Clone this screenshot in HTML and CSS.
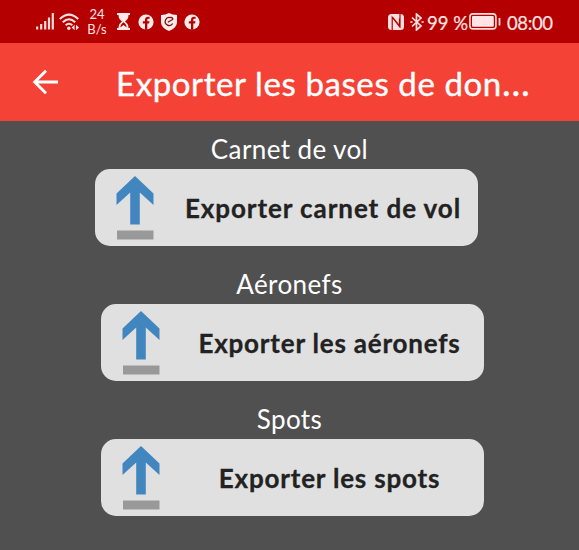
FILE: index.html
```html
<!DOCTYPE html>
<html lang="fr">
<head>
<meta charset="utf-8">
<title>Exporter les bases de données</title>
<link rel="stylesheet" href="styles.css">
</head>
<body>
<svg width="0" height="0" class="defs" aria-hidden="true">
  <symbol id="fb" viewBox="0 0 16 16"><circle cx="8" cy="8" r="7.6" fill="#ffeaea"/><path d="M7 15.8V9.6H4.8V7.3H7V6c0-2.100 1.200-3.200 3.100-3.200h1.500v2h-1.200c-.7 0-1.100.4-1.100 1.100v1.400h2.200l-.4 2.300H9.300v6.200z" fill="#b40000"/></symbol>
  <symbol id="export" viewBox="0 0 40 66"><path d="M20 1 38.500 18.500V30L24.800 17.500v32H15.200v-32L1.500 30V18.500z" fill="#4286c0"/><path d="M2 55.500h36.500v9H2z" fill="#999"/></symbol>
</svg>
<div class="status">
  <div class="left">
    <svg class="signal" width="18" height="17" viewBox="0 0 18 17"><path d="M1.200 13.500v3M5.200 11v5.500M9.200 8v8.500M13 4.500v12M16.800 0v16.500" stroke="#ffdada" stroke-width="2.200"/></svg>
    <svg class="wifi" width="22" height="18" viewBox="0 0 22 18" fill="none" stroke="#ffe0e0" stroke-width="2.100"><path d="M.8 6Q10 -2.800 19.200 6M3.800 9.300Q10 3.200 16.200 9.300M6.700 12.300Q10 9.200 13.300 12.300"/><circle cx="9.800" cy="15.300" r="1.700" fill="#ffe0e0" stroke="none"/><path d="m15.600 11.800-3 2.700 3 2.700zM17 11.800l3 2.700-3 2.700z" fill="#ffe0e0" stroke="none"/></svg>
    <div class="rate"><span>24</span><span>B/s</span></div>
    <svg class="glass" width="13" height="17" viewBox="0 0 13 17"><path d="M0 0h13v2h-1.500c0 3.500-1.500 5-3.500 6.500 2 1.500 3.500 3 3.500 6.500H13v2H0v-2h1.500c0-3.500 1.500-5 3.500-6.500C3 7 1.500 5.500 1.500 2H0z" fill="#ffeaea"/><path d="M3.300 14.500c.3-2.600 1.500-4 3.200-5.200 1.700 1.200 2.900 2.600 3.200 5.200L6.500 12z" fill="#b40000"/></svg>
    <svg class="fb" width="16" height="16"><use href="#fb"/></svg>
    <svg class="shield" width="16" height="18" viewBox="0 0 16 18"><path d="M8 0q3.500 2 8 2v7c0 4.500-3.500 7.200-8 9-4.500-1.800-8-4.500-8-9V2q4.500 0 8-2z" fill="#ffeaea"/><path d="M9.500 4.700A4 4 0 1 0 11.700 10.500M6.800 9.200l4.800-2.700M9.500 4.200q2.500.5 2.300 2.500" fill="none" stroke="#7c1010" stroke-width="1.300"/></svg>
    <svg class="fb" width="16" height="16"><use href="#fb"/></svg>
  </div>
  <div class="right">
    <svg class="nfc" width="16" height="16" viewBox="0 0 16 16"><rect width="16" height="16" rx="3.500" fill="#ffe0e0"/><path d="M4.200 16V3.200L11.500 12.500V4.500M12 0v12.500L4.700 3.500" fill="none" stroke="#b40000" stroke-width="1.200"/></svg>
    <svg class="bt" width="14" height="18" viewBox="0 0 14 18" fill="none" stroke="#ffe0e0" stroke-width="1.700"><path d="m2 4.500 9 8.500-4.500 4V1L11 5l-9 8.500"/><path d="M.3 9h2.200M11.500 9h2.200"/></svg>
    <span class="pct">99 %</span>
    <svg class="battery" width="32" height="17" viewBox="0 0 32 17"><rect x=".9" y=".9" width="26" height="15" rx="3" fill="none" stroke="#ffdede" stroke-width="1.600"/><rect x="3" y="3" width="21.800" height="10.800" rx="1" fill="#ffe5e5"/><path d="M30.500 5v7.500" stroke="#ffdede" stroke-width="1.800"/></svg>
    <span class="time">08:00</span>
  </div>
</div>
<header class="bar">
  <svg class="back" width="26" height="26" viewBox="0 0 26 26" fill="none" stroke="#fff" stroke-width="2.900"><path d="M26 13H2.800M14 1.700 2.700 13 14 24.300"/></svg>
  <h1>Exporter les bases de don<span>…</span></h1>
</header>
<main>
  <section>
    <h2 class="l1">Carnet de vol</h2>
    <button class="shifted"><svg width="40" height="66"><use href="#export"/></svg><span class="b1">Exporter carnet de vol</span></button>
  </section>
  <section>
    <h2 class="l2">Aéronefs</h2>
    <button><svg width="40" height="66"><use href="#export"/></svg><span class="b2">Exporter les aéronefs</span></button>
  </section>
  <section>
    <h2 class="l3">Spots</h2>
    <button><svg width="40" height="66"><use href="#export"/></svg><span class="b3">Exporter les spots</span></button>
  </section>
</main>
</body>
</html>
```
FILE: styles.css
```css
* { box-sizing: border-box; }
body {
  margin: 0;
  width: 579px;
  height: 550px;
  overflow: hidden;
  background: #505050;
  color: #fff;
  font-family: Lato, "Open Sans", sans-serif;
}
.defs { position: absolute; }
svg { display: block; flex: none; }
.status {
  height: 43px;
  background: #b40000;
  display: flex;
  justify-content: space-between;
  padding: 0 27px 0 36px;
  color: #ffe4e4;
}
.left, .right { display: flex; align-items: center; }
.signal { margin-right: 5px; }
.rate {
  width: 26px;
  margin: 1px 7px 0 3px;
  display: flex;
  flex-direction: column;
  align-items: center;
  font-size: 13px;
  line-height: 15px;
}
.glass { margin-right: 8px; }
.fb { margin-right: 7px; }
.shield { margin-right: 7px; }
.nfc { margin-right: 6px; }
.bt { margin-right: 3px; }
.pct, .time { line-height: 24px; white-space: nowrap; -webkit-text-stroke: 0.2px; }
.pct { width: 42px; font-size: 18.500px; margin-top: 2px; }
.time { width: 45px; font-size: 18.500px; letter-spacing: -0.4px; margin: 2px 0 0 6px; }
.bar {
  height: 78px;
  background: #f44336;
  display: flex;
  align-items: center;
  padding-left: 32px;
}
.bar h1 {
  margin: 2px 0 0 58px;
  font-size: 33px;
  line-height: 44px;
  font-weight: 400;
  letter-spacing: 0.6px;
  white-space: nowrap;
  -webkit-text-stroke: 0.4px;
}
.bar h1 span { font-size: 37px; line-height: 1; letter-spacing: 0; }
main {
  padding-top: 8px;
  display: flex;
  flex-direction: column;
  gap: 18px;
}
section { display: flex; flex-direction: column; align-items: center; }
h2 {
  margin: 0;
  height: 40px;
  font-size: 26px;
  line-height: 41px;
  font-weight: 400;
  letter-spacing: 0.4px;
}
button {
  width: 383px;
  height: 77px;
  margin-left: 6px;
  border: 0;
  border-radius: 15px;
  background: #e0e0e0;
  color: #222;
  display: flex;
  align-items: center;
  padding: 0 0 0 20px;
  font: 700 26px/36px Lato, "Open Sans", sans-serif;
}
.shifted { margin: 0 7px 0 0; }
button span {
  flex: 1;
  text-align: center;
  margin-left: 14px;
  white-space: nowrap;
  letter-spacing: 0.8px;
  -webkit-text-stroke: 0.3px;
}
.b1 { letter-spacing: 0.93px; }
```
